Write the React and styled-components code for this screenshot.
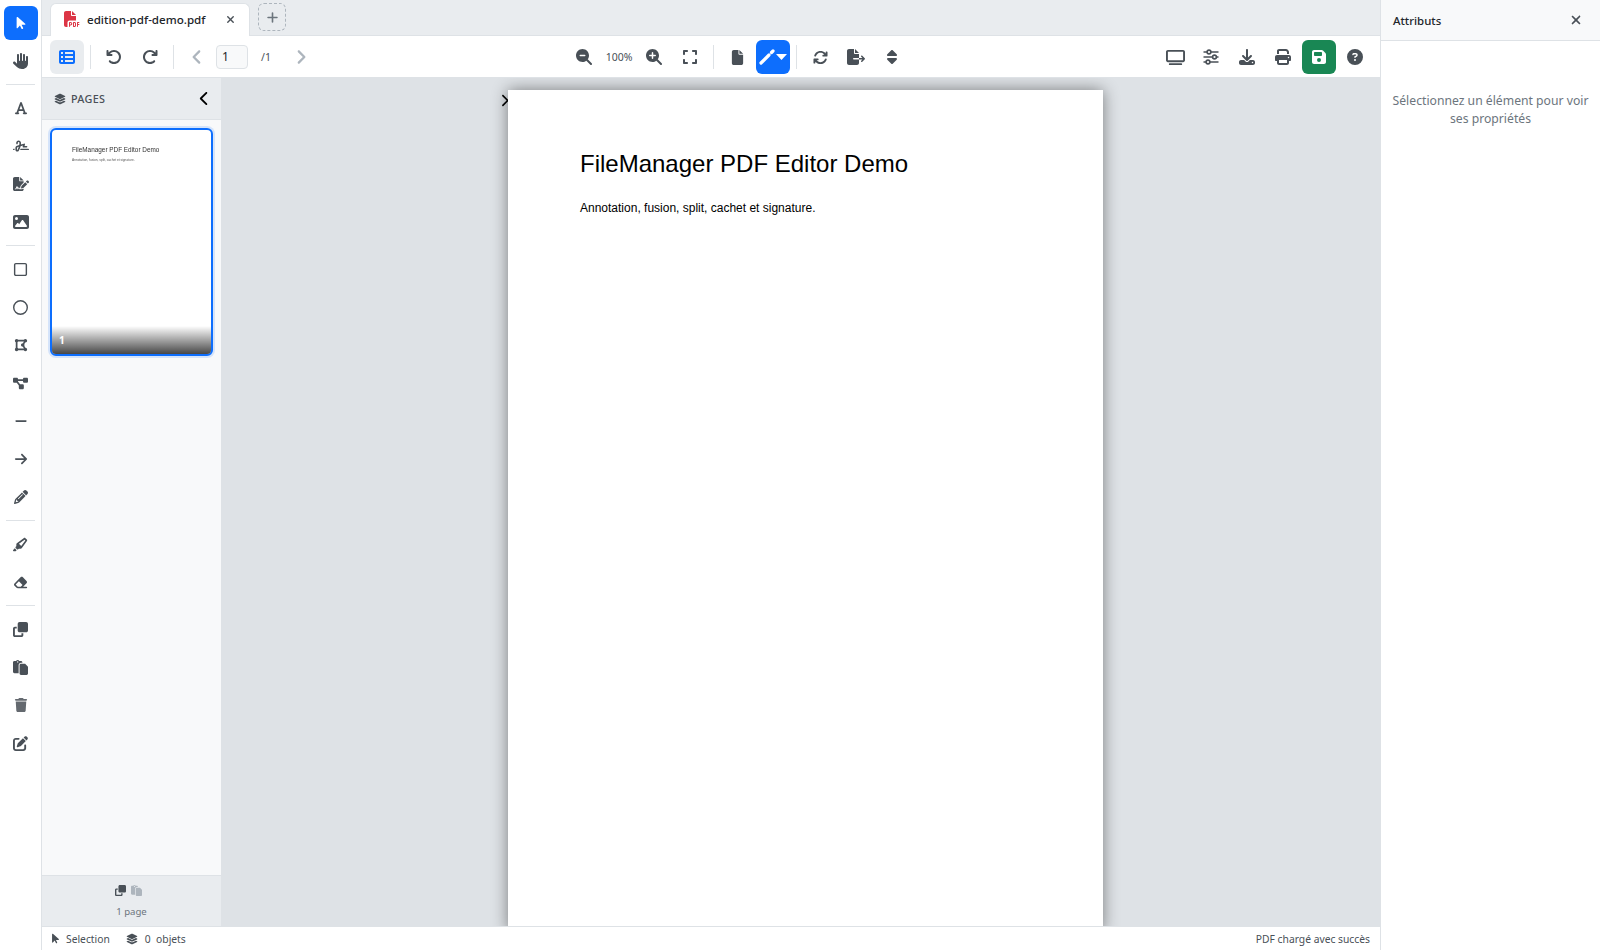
import React from 'react';
import styled, { createGlobalStyle } from 'styled-components';
import {
  FaArrowPointer, FaHand, FaFont, FaSignature, FaFileSignature, FaImage, FaRegSquare, FaRegCircle,
  FaDrawPolygon, FaDiagramProject, FaMinus, FaArrowRight, FaPencil, FaHighlighter, FaEraser, FaClone, FaPaste, FaTrash,
  FaPenToSquare, FaArrowRotateLeft, FaArrowRotateRight, FaAngleLeft, FaAngleRight, FaChevronLeft, FaChevronRight,
  FaMagnifyingGlassMinus, FaMagnifyingGlassPlus, FaExpand, FaFile, FaArrowsRotate, FaFileExport,
  FaSort, FaDownload, FaPrint, FaFloppyDisk, FaCircleQuestion, FaLayerGroup, FaXmark, FaPlus,
  FaFilePdf, FaTableList, FaTv,
} from 'react-icons/fa6';

const GlobalStyle = createGlobalStyle`
  html, body, #root { height: 100%; margin: 0; }
  body { font-family: "Noto Sans", "Open Sans", sans-serif; color: #212529; overflow: hidden; }
  * { box-sizing: border-box; }
`;

const Shell = styled.div`
  display: flex;
  height: 950px;
  width: 1600px;
  overflow: hidden;
`;

const Rail = styled.aside`
  display: flex;
  flex-direction: column;
  align-items: center;
  gap: 4px;
  width: 42px;
  flex: none;
  padding-top: 6px;
  background: #fff;
  border-right: 1px solid #dee2e6;
`;

const RailSep = styled.div`
  width: 29px;
  height: 1px;
  margin: 2px 0;
  background: #dee2e6;
  flex: none;
`;

const IconBtn = styled.button`
  display: flex;
  align-items: center;
  justify-content: center;
  gap: 1px;
  width: 34px;
  height: 34px;
  flex: none;
  padding: 0;
  border: 0;
  border-radius: 6px;
  font-size: ${p => p.$size || 16}px;
  color: ${p => (p.$tone === 'primary' || p.$tone === 'success' ? '#fff' : p.$tone === 'active' ? '#0d6efd' : p.$muted ? '#adb5bd' : '#495057')};
  background: ${p => (p.$tone === 'primary' ? '#0d6efd' : p.$tone === 'success' ? '#198754' : p.$tone === 'active' ? '#e9ecef' : 'transparent')};
  opacity: ${p => (p.$faded ? 0.85 : 1)};
`;

const Middle = styled.div`
  display: flex;
  flex-direction: column;
  flex: 1;
  min-width: 0;
`;

const TabBar = styled.div`
  display: flex;
  align-items: flex-start;
  gap: 8px;
  height: 36px;
  flex: none;
  padding: 3px 0 0 8px;
  background: #e9ecef;
  border-bottom: 1px solid #dee2e6;
`;

const Tab = styled.div`
  display: flex;
  align-items: center;
  width: 200px;
  height: 33px;
  padding: 0 13px 2px 13px;
  background: #fff;
  border: 1px solid #dee2e6;
  border-bottom: 0;
  border-radius: 6px 6px 0 0;
  font-size: 11.6px;
  font-weight: 500;
  color: #212529;
  svg.pdf { color: #dc3545; font-size: 16px; margin-right: 7px; }
  span { flex: 1; }
  svg.close { color: #495057; font-size: 11px; }
`;

const AddTab = styled.div`
  display: flex;
  align-items: center;
  justify-content: center;
  width: 28px;
  height: 28px;
  border: 1px dashed #adb5bd;
  border-radius: 6px;
  color: #6c757d;
  font-size: 13px;
`;

const Toolbar = styled.div`
  display: flex;
  align-items: center;
  justify-content: space-between;
  height: 42px;
  flex: none;
  padding: 1px 8px 0;
  background: #fff;
  border-bottom: 1px solid #dee2e6;
`;

const Group = styled.div`
  display: flex;
  align-items: center;
  gap: 2px;
`;

const ToolSep = styled.div`
  width: 1px;
  height: 24px;
  margin: 0 4px;
  background: #dee2e6;
`;

const PageInput = styled.div`
  width: 32px;
  height: 24px;
  padding-left: 5px;
  border: 1px solid #dee2e6;
  border-radius: 4px;
  background: #f8f9fa;
  font-size: 12px;
  line-height: 22px;
  color: #212529;
`;

const ToolLabel = styled.span`
  width: 32px;
  text-align: center;
  font-size: 10.5px;
  color: #495057;
`;

const Workspace = styled.div`
  display: flex;
  flex: 1;
  min-height: 0;
`;

const PagesPanel = styled.div`
  display: flex;
  flex-direction: column;
  width: 179px;
  flex: none;
  background: #f8f9fa;
`;

const PagesHeader = styled.div`
  display: flex;
  align-items: center;
  justify-content: space-between;
  height: 42px;
  flex: none;
  padding: 0 9px 0 12px;
  background: #e9ecef;
  border-bottom: 1px solid #dee2e6;
  color: #495057;
  font-size: 10.8px;
  font-weight: 500;
  letter-spacing: 0.3px;
  > span { display: flex; align-items: center; gap: 5px; }
  > svg { color: #000; font-size: 15px; }
`;

const ThumbList = styled.div`
  flex: 1;
  padding: 8px 8px 0;
`;

const Thumb = styled.div`
  position: relative;
  height: 228px;
  padding: 16px 0 0 20px;
  background: #fff;
  border: 2px solid #0d6efd;
  border-radius: 6px;
  box-shadow: 0 0 0 2px rgba(13, 110, 253, 0.15);
  overflow: hidden;
  font-family: "Liberation Sans", Arial, sans-serif;
  color: #333;
`;

const ThumbTitle = styled.div`
  font-size: 6.4px;
  line-height: 8px;
  white-space: nowrap;
  filter: blur(0.25px);
`;

const ThumbText = styled.div`
  font-size: 3.2px;
  line-height: 5px;
  margin-top: 4px;
  white-space: nowrap;
  color: #555;
  filter: blur(0.2px);
`;

const ThumbBadge = styled.div`
  position: absolute;
  left: 0;
  right: 0;
  bottom: 0;
  height: 28px;
  padding: 7px 0 0 7px;
  background: linear-gradient(to bottom, rgba(0, 0, 0, 0), rgba(0, 0, 0, 0.72));
  color: #fff;
  font-family: "Noto Sans", sans-serif;
  font-size: 10px;
  font-weight: 700;
`;

const PagesFooter = styled.div`
  display: flex;
  flex-direction: column;
  align-items: center;
  height: 51px;
  flex: none;
  padding: 9px 0 0;
  background: #e9ecef;
  border-top: 1px solid #dee2e6;
  font-size: 9.6px;
  color: #6c757d;
`;

const FooterIcons = styled.div`
  display: flex;
  gap: 5px;
  height: 12px;
  margin: 0 6px 8px 0;
  font-size: 11px;
  color: #495057;
  svg + svg { color: #adb5bd; }
`;

const Viewer = styled.div`
  position: relative;
  display: flex;
  justify-content: center;
  flex: 1;
  min-width: 0;
  padding: 12px 0 0 9px;
  background: #dee2e6;
  overflow: hidden;
`;

const ExpandToggle = styled.div`
  position: absolute;
  left: 277px;
  top: 16px;
  color: #000;
  font-size: 13px;
  line-height: 14px;
`;

const Sheet = styled.div`
  position: relative;
  width: 595px;
  height: 842px;
  flex: none;
  padding: 60px 0 0 72.5px;
  background: #fff;
  box-shadow: 0 0 15px rgba(0, 0, 0, 0.45);
  font-family: "Liberation Sans", Arial, sans-serif;
  color: #000;
`;

const SheetTitle = styled.div`
  font-size: 24px;
  line-height: 28px;
`;

const SheetText = styled.div`
  font-size: 12px;
  line-height: 14px;
  margin-top: 23px;
`;

const StatusBar = styled.div`
  display: flex;
  align-items: center;
  height: 24px;
  flex: none;
  padding: 0 10px 0 8px;
  background: #fff;
  border-top: 1px solid #dee2e6;
  font-size: 10.3px;
  color: #495057;
`;

const StatusItem = styled.span`
  display: flex;
  align-items: center;
  gap: ${p => p.$gap || 5}px;
  margin-right: 16px;
  svg { font-size: ${p => p.$icon || 11}px; }
`;

const StatusEnd = styled.span`
  margin-left: auto;
`;

const AttrPanel = styled.aside`
  display: flex;
  flex-direction: column;
  width: 220px;
  flex: none;
  background: #fff;
  border-left: 1px solid #dee2e6;
`;

const AttrHeader = styled.div`
  display: flex;
  align-items: center;
  justify-content: space-between;
  height: 41px;
  flex: none;
  padding: 0 17px 0 12px;
  background: #f8f9fa;
  border-bottom: 1px solid #dee2e6;
  font-size: 11.4px;
  font-weight: 500;
  color: #212529;
  svg { font-size: 14px; color: #495057; }
`;

const AttrEmpty = styled.div`
  padding: 51px 8px 0;
  text-align: center;
  font-size: 12.2px;
  line-height: 18px;
  color: #6c757d;
`;

const WandIcon = () => (
  <svg width="16" height="16" viewBox="0 0 16 16" fill="none" stroke="currentColor" strokeLinecap="round">
    <path d="M2 14 L10 6" strokeWidth="3.2" />
    <path d="M12.5 3.5 L14 2" strokeWidth="3.2" />
  </svg>
);

const CaretIcon = () => (
  <svg width="11" height="6" viewBox="0 0 11 6" fill="currentColor">
    <path d="M0 0 H11 L5.5 6 Z" />
  </svg>
);

const SlidersIcon = () => (
  <svg width="16" height="16" viewBox="0 0 16 16" fill="none" stroke="currentColor" strokeWidth="1.6">
    <path d="M0.5 3 H15.5 M0.5 8 H15.5 M0.5 13 H15.5" />
    <circle cx="6" cy="3" r="1.9" fill="#fff" />
    <circle cx="11.5" cy="8" r="1.9" fill="#fff" />
    <circle cx="5" cy="13" r="1.9" fill="#fff" />
  </svg>
);

const railGroups = [
  [[FaArrowPointer, { $tone: 'primary', $size: 14 }], [FaHand, {}]],
  [[FaFont, { $size: 14 }], [FaSignature, {}], [FaFileSignature, {}], [FaImage, {}]],
  [[FaRegSquare, { $size: 15 }], [FaRegCircle, { $size: 15 }], [FaDrawPolygon, { $size: 14 }], [FaDiagramProject, { $size: 15 }], [FaMinus, { $size: 14 }], [FaArrowRight, { $size: 14 }], [FaPencil, { $size: 14 }]],
  [[FaHighlighter, { $size: 15 }], [FaEraser, { $size: 15 }]],
  [[FaClone, { $size: 15 }], [FaPaste, { $size: 15 }], [FaTrash, { $size: 14, $faded: true }], [FaPenToSquare, { $size: 15 }]],
];

const rightTools = [
  [SlidersIcon, {}],
  [FaDownload, {}],
  [FaPrint, {}],
  [FaFloppyDisk, { $tone: 'success' }],
  [FaCircleQuestion, {}],
];

const App = () => (
  <Shell>
    <GlobalStyle />
    <Rail>
      {railGroups.map((group, i) => (
        <React.Fragment key={i}>
          {i > 0 && <RailSep />}
          {group.map(([Icon, props], j) => (
            <IconBtn key={j} {...props}><Icon /></IconBtn>
          ))}
        </React.Fragment>
      ))}
    </Rail>

    <Middle>
      <TabBar>
        <Tab>
          <FaFilePdf className="pdf" />
          <span>edition-pdf-demo.pdf</span>
          <FaXmark className="close" />
        </Tab>
        <AddTab><FaPlus /></AddTab>
      </TabBar>

      <Toolbar>
        <Group>
          <IconBtn $tone="active"><FaTableList /></IconBtn>
          <ToolSep />
          <IconBtn><FaArrowRotateLeft /></IconBtn>
          <IconBtn><FaArrowRotateRight /></IconBtn>
          <ToolSep />
          <IconBtn $muted><FaAngleLeft size={18} /></IconBtn>
          <PageInput>1</PageInput>
          <ToolLabel>/1</ToolLabel>
          <IconBtn $muted><FaAngleRight size={18} /></IconBtn>
        </Group>
        <Group>
          <IconBtn><FaMagnifyingGlassMinus /></IconBtn>
          <ToolLabel>100%</ToolLabel>
          <IconBtn><FaMagnifyingGlassPlus /></IconBtn>
          <IconBtn><FaExpand /></IconBtn>
          <ToolSep />
          <IconBtn><FaFile size={15} /></IconBtn>
          <IconBtn $tone="primary"><WandIcon /><CaretIcon /></IconBtn>
          <ToolSep />
          <IconBtn><FaArrowsRotate size={15} /></IconBtn>
          <IconBtn><FaFileExport size={18} /></IconBtn>
          <IconBtn><FaSort /></IconBtn>
        </Group>
        <Group>
          <IconBtn $size={19}><FaTv /></IconBtn>
          {rightTools.map(([Icon, props], i) => (
            <IconBtn key={i} {...props}><Icon /></IconBtn>
          ))}
        </Group>
      </Toolbar>

      <Workspace>
        <PagesPanel>
          <PagesHeader>
            <span><FaLayerGroup size={12} />PAGES</span>
            <FaChevronLeft />
          </PagesHeader>
          <ThumbList>
            <Thumb>
              <ThumbTitle>FileManager PDF Editor Demo</ThumbTitle>
              <ThumbText>Annotation, fusion, split, cachet et signature.</ThumbText>
              <ThumbBadge>1</ThumbBadge>
            </Thumb>
          </ThumbList>
          <PagesFooter>
            <FooterIcons><FaClone /><FaPaste /></FooterIcons>
            1 page
          </PagesFooter>
        </PagesPanel>
        <Viewer>
          <ExpandToggle><FaChevronRight /></ExpandToggle>
          <Sheet>
            <SheetTitle>FileManager PDF Editor Demo</SheetTitle>
            <SheetText>Annotation, fusion, split, cachet et signature.</SheetText>
          </Sheet>
        </Viewer>
      </Workspace>

      <StatusBar>
        <StatusItem><FaArrowPointer />Selection</StatusItem>
        <StatusItem $gap={7} $icon={12}><FaLayerGroup />0&nbsp; objets</StatusItem>
        <StatusEnd>PDF chargé avec succès</StatusEnd>
      </StatusBar>
    </Middle>

    <AttrPanel>
      <AttrHeader>Attributs<FaXmark /></AttrHeader>
      <AttrEmpty>Sélectionnez un élément pour voir ses propriétés</AttrEmpty>
    </AttrPanel>
  </Shell>
);

export default App;
